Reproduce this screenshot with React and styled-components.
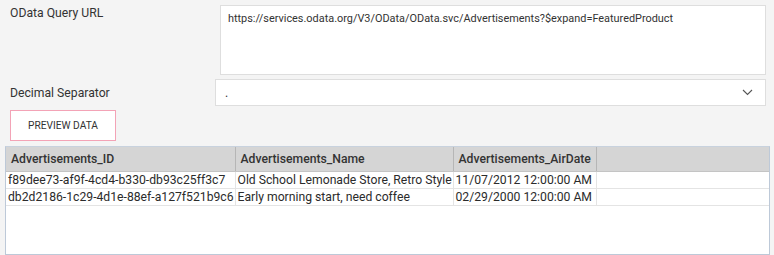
import React from "react";
import styled, { createGlobalStyle } from "styled-components";

const Global = createGlobalStyle`
  html, body { margin: 0; padding: 0; background: #f4f4f4; }
  body { font-family: "Segoe UI", Roboto, "Noto Sans", sans-serif; color: #333; }
`;

const Page = styled.div`
  width: 774px;
  height: 255px;
  box-sizing: border-box;
  padding: 5px 4px 0 5px;
  display: flex;
  flex-direction: column;
  overflow: hidden;
`;

const FieldRow = styled.div`
  display: grid;
  grid-template-columns: ${(p) => p.labelWidth}px 1fr;
  align-items: ${(p) => (p.top ? "start" : "center")};
  margin-bottom: ${(p) => p.gap || 0}px;
`;

const Label = styled.div`
  font-size: 12.2px;
  color: #333;
  padding-left: 5px;
  line-height: 16px;
`;

const TextArea = styled.div`
  height: 70px;
  box-sizing: border-box;
  background: #fff;
  border: 1px solid #dedede;
  padding: 5px 7px;
  font-size: 10.9px;
  line-height: 16px;
  color: #333;
  margin-right: 4px;
  white-space: nowrap;
`;

const Select = styled.div`
  height: 27px;
  box-sizing: border-box;
  background: #fff;
  border: 1px solid #dedede;
  display: flex;
  align-items: center;
  justify-content: space-between;
  padding: 0 12px 0 9px;
  font-size: 12.2px;
  color: #333;
  margin-right: 4px;
`;

const Button = styled.button`
  align-self: flex-start;
  margin: 4px 0 0 5px;
  width: 106px;
  height: 31px;
  background: #fff;
  border: 1px solid #f3a3b6;
  font-family: inherit;
  font-size: 10.2px;
  color: #333;
  padding: 0;
`;

const TableBox = styled.div`
  margin-top: 5px;
  width: 765px;
  height: 109px;
  box-sizing: border-box;
  background: #fff;
  border: 1px solid #bdc9d8;
  border-top-color: #c8d2de;
`;

const Table = styled.table`
  border-collapse: collapse;
  width: 100%;
  font-size: 12.2px;
  table-layout: fixed;
`;

const Th = styled.th`
  background: #d5d5d5;
  height: 24px;
  padding: 0 0 0 5px;
  text-align: left;
  font-weight: 500;
  color: #333;
  border-right: 1px solid #b6b6b6;
  border-bottom: 1px solid #c4c4c4;
  white-space: nowrap;
  overflow: hidden;
  &:last-child { border-right: none; }
`;

const Td = styled.td`
  height: 16px;
  padding: 0 0 0 2px;
  color: #2b2b2b;
  border-right: 1px solid #e4e4e4;
  border-bottom: 1px solid #e4e4e4;
  white-space: nowrap;
  overflow: hidden;
  line-height: 16px;
  &:last-child { border-right: none; }
`;

const Chevron = () => (
  <svg width="11" height="7" viewBox="0 0 11 7">
    <path d="M1 1 L5.5 5.5 L10 1" fill="none" stroke="#555" strokeWidth="1.1" />
  </svg>
);

const cols = [
  { name: "Advertisements_ID", w: 229 },
  { name: "Advertisements_Name", w: 218 },
  { name: "Advertisements_AirDate", w: 143 },
  { name: "", w: null },
];

const rows = [
  ["f89dee73-af9f-4cd4-b330-db93c25ff3c7", "Old School Lemonade Store, Retro Style", "11/07/2012 12:00:00 AM"],
  ["db2d2186-1c29-4d1e-88ef-a127f521b9c6", "Early morning start, need coffee", "02/29/2000 12:00:00 AM"],
];

export default function App() {
  return (
    <>
      <Global />
      <Page>
        <FieldRow labelWidth={215} top gap={4}>
          <Label>OData Query URL</Label>
          <TextArea>https://services.odata.org/V3/OData/OData.svc/Advertisements?$expand=FeaturedProduct</TextArea>
        </FieldRow>
        <FieldRow labelWidth={210}>
          <Label>Decimal Separator</Label>
          <Select>
            <span>.</span>
            <Chevron />
          </Select>
        </FieldRow>
        <Button>PREVIEW DATA</Button>
        <TableBox>
          <Table>
            <colgroup>
              {cols.map((c, i) => (
                <col key={i} style={c.w ? { width: c.w } : undefined} />
              ))}
            </colgroup>
            <thead>
              <tr>
                {cols.map((c, i) => (
                  <Th key={i}>{c.name}</Th>
                ))}
              </tr>
            </thead>
            <tbody>
              {rows.map((r, i) => (
                <tr key={i}>
                  {r.map((v, j) => (
                    <Td key={j}>{v}</Td>
                  ))}
                  <Td />
                </tr>
              ))}
            </tbody>
          </Table>
        </TableBox>
      </Page>
    </>
  );
}
